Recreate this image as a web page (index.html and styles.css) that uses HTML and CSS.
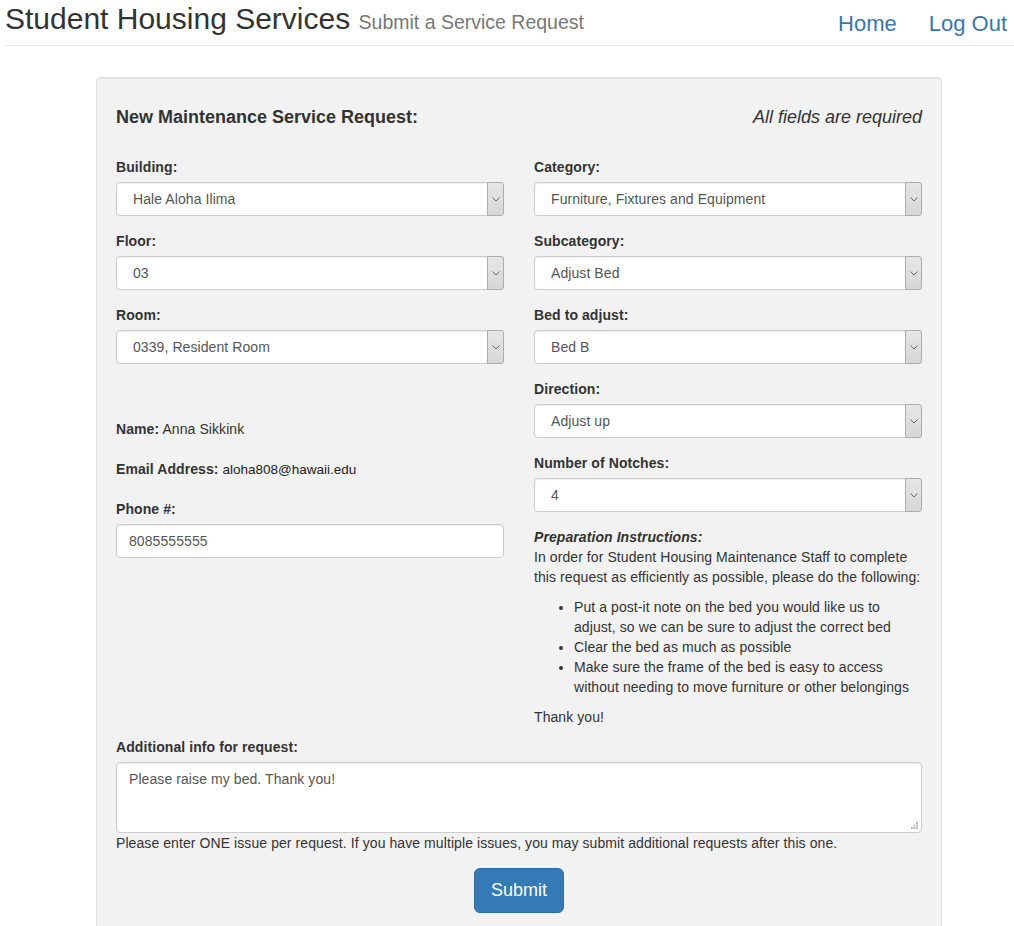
FILE: index.html
```html
<!DOCTYPE html>
<html lang="en">
<head>
<meta charset="utf-8">
<title>Submit a Service Request</title>
<link rel="stylesheet" href="styles.css">
</head>
<body>
<header class="topbar">
  <h1 class="brand">Student Housing Services <small class="brand-sub">Submit a Service Request</small></h1>
  <nav class="nav">
    <a class="nav-link" href="#">Home</a>
    <a class="nav-link" href="#">Log Out</a>
  </nav>
</header>

<main class="well">
  <div class="form-head">
    <h3 class="form-title">New Maintenance Service Request:</h3>
    <span class="form-note">All fields are required</span>
  </div>

  <div class="cols">
    <div class="col">
      <div class="group">
        <label class="lbl">Building:</label>
        <div class="sel"><select class="sel-input"><option>Hale Aloha Ilima</option></select><span class="sel-btn"><svg width="8" height="5" viewBox="0 0 8 5"><path d="M0.5 0.5 L4 4 L7.5 0.5" fill="none" stroke="#666" stroke-width="1"/></svg></span></div>
      </div>
      <div class="group">
        <label class="lbl">Floor:</label>
        <div class="sel"><select class="sel-input"><option>03</option></select><span class="sel-btn"><svg width="8" height="5" viewBox="0 0 8 5"><path d="M0.5 0.5 L4 4 L7.5 0.5" fill="none" stroke="#666" stroke-width="1"/></svg></span></div>
      </div>
      <div class="group">
        <label class="lbl">Room:</label>
        <div class="sel"><select class="sel-input"><option>0339, Resident Room</option></select><span class="sel-btn"><svg width="8" height="5" viewBox="0 0 8 5"><path d="M0.5 0.5 L4 4 L7.5 0.5" fill="none" stroke="#666" stroke-width="1"/></svg></span></div>
      </div>
      <p class="info info-first"><b>Name:</b> Anna Sikkink</p>
      <p class="info"><b>Email Address:</b> <span class="email">aloha808@hawaii.edu</span></p>
      <div class="group">
        <label class="lbl">Phone #:</label>
        <input class="txt" type="text" value="8085555555">
      </div>
    </div>

    <div class="col">
      <div class="group">
        <label class="lbl">Category:</label>
        <div class="sel"><select class="sel-input"><option>Furniture, Fixtures and Equipment</option></select><span class="sel-btn"><svg width="8" height="5" viewBox="0 0 8 5"><path d="M0.5 0.5 L4 4 L7.5 0.5" fill="none" stroke="#666" stroke-width="1"/></svg></span></div>
      </div>
      <div class="group">
        <label class="lbl">Subcategory:</label>
        <div class="sel"><select class="sel-input"><option>Adjust Bed</option></select><span class="sel-btn"><svg width="8" height="5" viewBox="0 0 8 5"><path d="M0.5 0.5 L4 4 L7.5 0.5" fill="none" stroke="#666" stroke-width="1"/></svg></span></div>
      </div>
      <div class="group">
        <label class="lbl">Bed to adjust:</label>
        <div class="sel"><select class="sel-input"><option>Bed B</option></select><span class="sel-btn"><svg width="8" height="5" viewBox="0 0 8 5"><path d="M0.5 0.5 L4 4 L7.5 0.5" fill="none" stroke="#666" stroke-width="1"/></svg></span></div>
      </div>
      <div class="group">
        <label class="lbl">Direction:</label>
        <div class="sel"><select class="sel-input"><option>Adjust up</option></select><span class="sel-btn"><svg width="8" height="5" viewBox="0 0 8 5"><path d="M0.5 0.5 L4 4 L7.5 0.5" fill="none" stroke="#666" stroke-width="1"/></svg></span></div>
      </div>
      <div class="group">
        <label class="lbl">Number of Notches:</label>
        <div class="sel"><select class="sel-input"><option>4</option></select><span class="sel-btn"><svg width="8" height="5" viewBox="0 0 8 5"><path d="M0.5 0.5 L4 4 L7.5 0.5" fill="none" stroke="#666" stroke-width="1"/></svg></span></div>
      </div>
      <p class="prep-title">Preparation Instructions:</p>
      <p class="prep">In order for Student Housing Maintenance Staff to complete this request as efficiently as possible, please do the following:</p>
      <ul class="prep-list">
        <li>Put a post-it note on the bed you would like us to adjust, so we can be sure to adjust the correct bed</li>
        <li>Clear the bed as much as possible</li>
        <li>Make sure the frame of the bed is easy to access without needing to move furniture or other belongings</li>
      </ul>
      <p class="prep">Thank you!</p>
    </div>
  </div>

  <div class="group-full">
    <label class="lbl">Additional info for request:</label>
    <div class="area-wrap">
      <textarea class="area">Please raise my bed. Thank you!</textarea>
      <svg class="grip" width="7" height="7" viewBox="0 0 7 7"><rect x="5" y="0" width="2" height="2" fill="#bbb"/><rect x="2.5" y="2.5" width="2" height="2" fill="#bbb"/><rect x="5" y="2.5" width="2" height="2" fill="#bbb"/><rect x="0" y="5" width="2" height="2" fill="#bbb"/><rect x="2.5" y="5" width="2" height="2" fill="#bbb"/><rect x="5" y="5" width="2" height="2" fill="#bbb"/></svg>
    </div>
    <p class="help">Please enter ONE issue per request. If you have multiple issues, you may submit additional requests after this one.</p>
  </div>

  <div class="actions">
    <button class="btn" type="button">Submit</button>
  </div>
</main>
</body>
</html>
```

FILE: styles.css
```css
* { box-sizing: border-box; }

html, body {
  margin: 0;
  padding: 0;
  background: #fff;
  font-family: "Liberation Sans", Arial, Helvetica, sans-serif;
  font-size: 14px;
  line-height: 20px;
  color: #333;
}

.topbar {
  display: flex;
  justify-content: space-between;
  align-items: flex-start;
  margin-left: 5px;
  height: 46px;
  border-bottom: 1px solid #e8e8e8;
  padding-right: 7px;
}

.brand {
  margin: 2px 0 0 0;
  font-size: 30px;
  line-height: 33px;
  font-weight: normal;
  color: #333;
}

.brand-sub {
  font-size: 19.5px;
  color: #777;
}

.nav {
  display: flex;
  gap: 32px;
  margin-top: 9px;
}

.nav-link {
  font-size: 22px;
  line-height: 30px;
  color: #3a77ad;
  text-decoration: none;
}

.well {
  display: block;
  width: 846px;
  margin: 31px 0 0 96px;
  padding: 19px;
  background: #f2f2f2;
  border: 1px solid #e3e3e3;
  border-radius: 4px;
  box-shadow: inset 0 1px 1px rgba(0,0,0,.05);
  letter-spacing: 0.08px;
}

.form-head {
  display: flex;
  justify-content: space-between;
  align-items: center;
  height: 40px;
  margin-bottom: 20px;
}

.form-title {
  margin: 0;
  font-size: 18px;
  font-weight: bold;
  line-height: 20px;
  letter-spacing: 0;
}

.form-note {
  font-size: 18px;
  font-style: italic;
  line-height: 20px;
  letter-spacing: 0;
}

.cols {
  display: grid;
  grid-template-columns: 388px 388px;
  column-gap: 30px;
}

.group {
  margin-bottom: 15px;
}

.lbl {
  display: block;
  font-weight: bold;
  margin-bottom: 5px;
}

.sel {
  display: flex;
  height: 34px;
  background: #fff;
  border: 1px solid #ccc;
  border-radius: 4px;
  box-shadow: inset 0 1px 1px rgba(0,0,0,.075);
}

.sel-input {
  flex: 1;
  -webkit-appearance: none;
  appearance: none;
  border: none;
  background: transparent;
  font-family: inherit;
  font-size: 14px;
  letter-spacing: 0.08px;
  color: #555;
  padding: 0 0 0 16px;
  margin: 0;
  outline: none;
}

.sel-btn {
  width: 17px;
  display: flex;
  align-items: center;
  justify-content: center;
  background: linear-gradient(#e6e6e6, #d6d6d6);
  border: 1px solid #adadad;
  border-radius: 0 3px 3px 0;
  margin: -1px -1px -1px 0;
}

.info {
  margin: 0 0 20px 0;
  height: 20px;
}

.info-first {
  margin-top: 55px;
}

.email {
  color: #222;
  font-size: 13.5px;
  line-height: 1;
  letter-spacing: 0;
}

.txt {
  display: block;
  width: 100%;
  height: 34px;
  padding: 6px 12px;
  font-family: inherit;
  font-size: 14px;
  letter-spacing: 0.08px;
  color: #555;
  background: #fff;
  border: 1px solid #ccc;
  border-radius: 4px;
  box-shadow: inset 0 1px 1px rgba(0,0,0,.075);
}

.prep-title {
  margin: 0;
  font-weight: bold;
  font-style: italic;
}

.prep {
  margin: 0 0 10px 0;
}

.prep-list {
  margin: 0 0 10px 0;
  padding: 0 4px 0 40px;
}

.group-full {
  margin-bottom: 15px;
}

.area-wrap {
  position: relative;
}

.area {
  display: block;
  width: 100%;
  height: 71px;
  padding: 6px 12px;
  font-family: inherit;
  font-size: 14px;
  line-height: 20px;
  letter-spacing: 0.08px;
  color: #555;
  background: #fff;
  border: 1px solid #ccc;
  border-radius: 4px;
  box-shadow: inset 0 1px 1px rgba(0,0,0,.075);
  resize: none;
}

.grip {
  position: absolute;
  right: 4px;
  bottom: 4px;
}

.help {
  margin: 0;
  color: #333;
}

.actions {
  display: flex;
  justify-content: center;
}

.btn {
  font-family: inherit;
  font-size: 18px;
  line-height: 23px;
  padding: 10px 16px;
  color: #fff;
  background: #337ab7;
  border: 1px solid #2e6da4;
  border-radius: 6px;
  letter-spacing: 0;
}
```
